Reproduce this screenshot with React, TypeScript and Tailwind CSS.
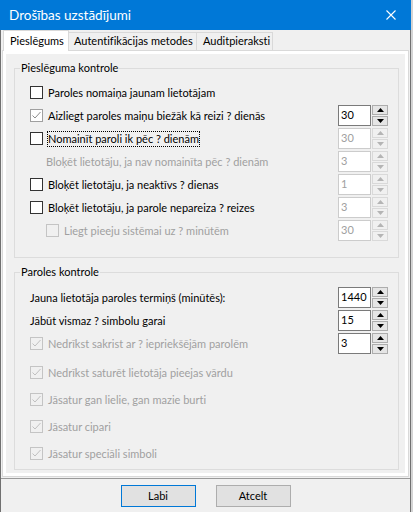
import clsx from "clsx";

type BoxKind = "off" | "soft" | "dimOff" | "dimOn";

function CheckBox({ kind }: { kind: BoxKind }) {
  const box = {
    off: "border-[#333333] bg-white",
    soft: "border-[#a0a0a0] bg-white",
    dimOff: "border-[#c4c4c4] bg-[#f0f0f0]",
    dimOn: "border-[#c4c4c4] bg-[#f0f0f0]",
  }[kind];
  const tick = kind === "soft" ? "#8c8c8c" : "#c0c0c0";
  return (
    <div className={clsx("flex h-[13px] w-[13px] shrink-0 items-center justify-center border", box)}>
      {(kind === "soft" || kind === "dimOn") && (
        <svg width="11" height="11" viewBox="0 0 11 11">
          <path d="M1.5 5.5 L4 8 L9.5 2" fill="none" stroke={tick} strokeWidth="1" />
        </svg>
      )}
    </div>
  );
}

function SpinButton({ up, disabled }: { up?: boolean; disabled?: boolean }) {
  const color = disabled ? "#b4b4b4" : "#000000";
  return (
    <div
      className={clsx(
        "flex h-[10px] w-[16px] items-center justify-center border",
        disabled ? "border-[#d9d9d9] bg-[#f0f0f0]" : "border-[#adadad] bg-[#e5e5e5]"
      )}
    >
      <svg width="7" height="4" viewBox="0 0 7 4">
        <polygon points={up ? "0,4 3.5,0 7,4" : "0,0 3.5,4 7,0"} fill={color} />
      </svg>
    </div>
  );
}

function Spin({ value, disabled }: { value: string; disabled?: boolean }) {
  return (
    <div className="ml-auto flex h-[21px] gap-[1px]">
      <div
        className={clsx(
          "flex h-[21px] w-[33px] items-center border bg-white pl-[2px] text-[11px]",
          disabled ? "border-[#cccccc] text-[#a0a0a0]" : "border-[#7a7a7a] text-black"
        )}
      >
        {value}
      </div>
      <div className="flex h-[21px] flex-col justify-between">
        <SpinButton up disabled={disabled} />
        <SpinButton disabled={disabled} />
      </div>
    </div>
  );
}

function Row({
  box,
  label,
  spin,
  spinOff,
  dim,
  indent,
  focus,
  tall,
}: {
  box?: BoxKind;
  label: string;
  spin?: string;
  spinOff?: boolean;
  dim?: boolean;
  indent?: boolean;
  focus?: boolean;
  tall?: boolean;
}) {
  return (
    <div className={clsx("flex items-center", tall ? "h-[27px]" : "h-[23px]", indent && "pl-[16px]")}>
      {box && <CheckBox kind={box} />}
      <span
        className={clsx(
          "whitespace-nowrap leading-[14px]",
          box ? (focus ? "ml-[4px] border border-dotted border-black" : "ml-[5px]") : "",
          dim ? "text-[#a0a0a0]" : "text-black"
        )}
      >
        {label}
      </span>
      {spin && <Spin value={spin} disabled={spinOff} />}
    </div>
  );
}

function Group({ title, children, className }: { title: string; children: React.ReactNode; className?: string }) {
  return (
    <fieldset className={clsx("border border-[#dcdcdc]", className)}>
      <legend className="ml-[5px] px-[1px] leading-[14px] text-black">{title}</legend>
      {children}
    </fieldset>
  );
}

export default function App() {
  return (
    <div className="h-[512px] w-[413px] overflow-hidden bg-[#d4d4d4] font-[Lato,sans-serif] text-[11px] [font-variant-ligatures:none]">
      <div className="flex h-full w-[411px] flex-col">
        <div className="flex h-[30px] shrink-0 items-center justify-between bg-[#0078d7] pl-[9px] pr-[15px] text-white">
          <span className="text-[13.5px]">Drošības uzstādījumi</span>
          <svg width="10" height="10" viewBox="0 0 10 10">
            <path d="M0.5 0.5 L9.5 9.5 M9.5 0.5 L0.5 9.5" stroke="#ffffff" strokeWidth="1.1" />
          </svg>
        </div>

        <div className="flex flex-1 flex-col border-x border-[#707070] bg-[#f0f0f0]">
          <div className="flex h-[21px] items-end pl-[2px]">
            <div className="relative z-10 flex h-[21px] w-[66px] items-center border-x border-t border-[#d9d9d9] bg-white pl-[6px]">
              Pieslēgums
            </div>
            <div className="mb-[1px] flex h-[18px] w-[128px] items-center border-r border-t border-[#d9d9d9] bg-[#f0f0f0] pl-[5px]">
              Autentifikācijas metodes
            </div>
            <div className="mb-[1px] flex h-[18px] w-[76px] items-center border-r border-t border-[#d9d9d9] bg-[#f0f0f0] pl-[6px]">
              Auditpieraksti
            </div>
          </div>

          <div className="-mt-[1px] ml-[1px] w-[407px] border border-[#d9d9d9] bg-white p-[3px]">
            <div className="bg-[#f0f0f0] pb-[3px] pl-[8px] pr-[6px] pt-[7px]">
              <Group title="Pieslēguma kontrole">
                <div className="pb-[15px] pl-[15px] pr-[10px] pt-[6px]">
                  <Row box="off" label="Paroles nomaiņa jaunam lietotājam" />
                  <Row box="soft" label="Aizliegt paroles maiņu biežāk kā reizi ? dienās" spin="30" />
                  <Row box="off" label="Nomainīt paroli ik pēc ? dienām" spin="30" spinOff focus />
                  <Row label="Bloķēt lietotāju, ja nav nomainīta pēc ? dienām" spin="3" spinOff dim indent />
                  <Row box="off" label="Bloķēt lietotāju, ja neaktīvs ? dienas" spin="1" spinOff />
                  <Row box="off" label="Bloķēt lietotāju, ja parole nepareiza ? reizes" spin="3" spinOff />
                  <Row box="dimOff" label="Liegt pieeju sistēmai uz ? minūtēm" spin="30" spinOff dim indent />
                </div>
              </Group>

              <Group title="Paroles kontrole" className="mt-[7px]">
                <div className="pb-[2px] pl-[15px] pr-[10px] pt-[7px]">
                  <Row label="Jauna lietotāja paroles termiņš (minūtēs):" spin="1440" />
                  <Row label="Jābūt vismaz ? simbolu garai" spin="15" />
                  <Row box="dimOn" label="Nedrīkst sakrist ar ? iepriekšējām parolēm" spin="3" dim />
                  <div className="mt-[4px]">
                    <Row box="dimOn" label="Nedrīkst saturēt lietotāja pieejas vārdu" dim tall />
                    <Row box="dimOn" label="Jāsatur gan lielie, gan mazie burti" dim tall />
                    <Row box="dimOn" label="Jāsatur cipari" dim tall />
                    <Row box="dimOn" label="Jāsatur speciāli simboli" dim tall />
                  </div>
                </div>
              </Group>
            </div>
          </div>

          <div className="mt-[1px] flex flex-1 justify-center gap-[20px] border-t border-[#9a9a9a] pt-[6px]">
            <button className="h-[22px] w-[75px] border border-[#0078d7] bg-[#e1e1e1] text-black">Labi</button>
            <button className="h-[22px] w-[75px] border border-[#adadad] bg-[#e1e1e1] text-black">Atcelt</button>
          </div>
        </div>
      </div>
    </div>
  );
}
